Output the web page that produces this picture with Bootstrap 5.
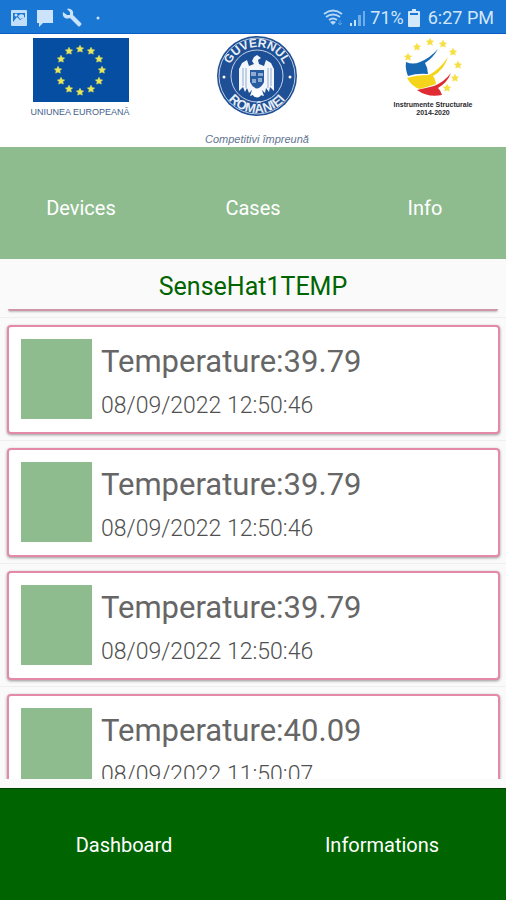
<!DOCTYPE html>
<html lang="en">
<head>
<meta charset="utf-8">
<meta name="viewport" content="width=device-width, initial-scale=1">
<title>SenseHat1TEMP</title>
<link href="https://cdn.jsdelivr.net/npm/bootstrap@5.3.0/dist/css/bootstrap.min.css" rel="stylesheet">
<style>
body { font-family: Roboto, "Liberation Sans", sans-serif; background: #fafafa; color: #666; }
.status-bar { background: #1976d2; color: #d3e7fb; height: 34px; font-size: 18px; line-height: 20px; border-bottom: 1px solid #0d5bc4; padding: 3px 12px 0 10px; }
.logo-bar { height: 113px; padding: 2px 32px 0; }
.logo-bar svg { display: block; overflow: visible; }
.logo-bar text { font-family: "Liberation Sans", sans-serif; }
.tab-bar { background: #8fbc8f; height: 112px; gap: 10px; }
.bottom-bar { background: #006400; height: 112px; gap: 10px; border-top: 1px solid #004000; }
.bar-btn { flex: 1 1 0; border: 0; background: transparent; color: #fff; font-size: 20px; line-height: 24px; padding: 10px 0 0; }
.bottom-bar .bar-btn { padding-top: 0; }
.screen-title { color: #006400; font-size: 25px; line-height: 32px; padding: 12px 0 6px; }
.readings { flex: 1 1 0; min-height: 0; overflow: hidden; margin-bottom: 9px; }
.reading { padding: 7px 6px 6px 7px; border-bottom: 1px solid #efefef; }
.reading-card { background: #fff; border: 2px solid #e58aa6; border-radius: 4px; box-shadow: 0 1px 3px rgba(0,0,0,.4); padding: 12px 12px 13px; gap: 9px; }
.swatch { width: 71px; height: 80px; background: #8fbc8f; }
.reading-value { font-size: 31px; line-height: 36px; padding-top: 5px; }
.reading-time { color: #505050; font-size: 23px; font-weight: 300; line-height: 26px; padding-top: 13px; }
.list-edge { height: 2px; background: #d095a6; margin: 0 8px 6px; box-shadow: 0 1px 2px rgba(0,0,0,.25); border-radius: 0 0 3px 3px; }
.edge-row { border-bottom: 1px solid #efefef; }
</style>
</head>
<body class="d-flex flex-column vh-100 overflow-hidden">
<div class="status-bar d-flex align-items-center justify-content-between flex-shrink-0">
  <div class="d-flex align-items-center gap-2">
    <svg width="18" height="18" viewBox="0 0 18 18" fill="#c2dff9" aria-hidden="true"><path fill-rule="evenodd" d="M2 1h14q1 0 1 1v14q0 1-1 1H2q-1 0-1-1V2q0-1 1-1zM3 4v9l4-5 3 3 5-3V4z"/><circle cx="6" cy="6" r="1.5"/><path d="M8 7l3-2 3 1v3l-4 1z"/></svg>
    <svg width="18" height="18" viewBox="0 0 18 18" fill="#cbe4fb" aria-hidden="true"><path d="M1 1h16v13H7l-4 4v-4H1z"/></svg>
    <svg width="20" height="20" viewBox="0 0 20 20" fill="#c8e3fb" aria-hidden="true"><path d="M5 1l3 3v3H5L1 4q-1 4 2 6 2 1 5 0l8 8q1 1 2 0l1-1q1-1 0-2l-8-8q1-5-3-6-1-1-3 0z"/></svg>
    <svg class="ms-1" width="8" height="8" viewBox="0 0 8 8" fill="#c8e3fb" aria-hidden="true"><circle cx="4" cy="4" r="1.5"/></svg>
  </div>
  <div class="d-flex align-items-center gap-1">
    <svg width="22" height="18" viewBox="0 0 22 18" fill="none" stroke="#b8d8f6" stroke-width="1.8" aria-hidden="true"><path d="M1 5q9-7 18 0M3 8q7-5 14 0M6 11q4-3 8 0"/><path d="M7 13q3-2 6 0l-3 3z" fill="#b8d8f6" stroke="none"/><path d="M17 11v5m-2-2l2 2 2-2" stroke="#5fa2e3" stroke-width="1"/></svg>
    <svg width="17" height="18" viewBox="0 0 17 18" aria-hidden="true"><g fill="#c8e2fa"><path d="M1 14h2v3H1zM5 11h2v6H5z"/></g><path d="M9 6h3v11H9zM14 2h2v15h-2z" fill="#6fadea"/></svg>
    <span>71%</span>
    <svg class="me-1" width="12" height="18" viewBox="0 0 12 18" fill="#d3e7fb" aria-hidden="true"><path fill-rule="evenodd" d="M4 0h4v2h3q1 0 1 1v14q0 1-1 1H1q-1 0-1-1V3q0-1 1-1h3zM2 4v2h8V4z"/></svg>
    <span>6:27 PM</span>
  </div>
</div>

<header class="logo-bar bg-white d-flex justify-content-between flex-shrink-0">
  <svg width="97" height="82" viewBox="0 0 97 82" role="img" aria-label="Uniunea Europeană">
    <defs><path id="star" stroke="#e6e65a" stroke-width=".6" stroke-linejoin="round" d="M0-3.7L1.2-1.3 3.6-1.1 1.8.7 2.3 3.1 0 2-2.3 3.1-1.8.7-3.6-1.1-1.2-1.3z"/></defs>
    <rect x="1" y="2" width="96" height="64" fill="#064ea2"/>
    <g fill="#e6e65a"><use href="#star" x="48" y="13"/><use href="#star" x="59" y="15"/><use href="#star" x="67" y="23"/><use href="#star" x="70" y="34"/><use href="#star" x="67" y="45"/><use href="#star" x="59" y="53"/><use href="#star" x="48" y="56"/><use href="#star" x="37" y="53"/><use href="#star" x="29" y="45"/><use href="#star" x="26" y="34"/><use href="#star" x="29" y="23"/><use href="#star" x="37" y="15"/></g>
    <text x="48" y="79" text-anchor="middle" font-size="9" fill="#44628c">UNIUNEA EUROPEANĂ</text>
  </svg>
  <svg width="104" height="110" viewBox="0 0 104 110" role="img" aria-label="Guvernul României, Competitivi împreună">
    <defs><path id="arcTop" d="M22 40a29 29 0 0 1 58 0"/><path id="arcBottom" d="M14 40a37 37 0 0 0 74 0"/></defs>
    <circle cx="51" cy="40" r="40" fill="#1f4f94"/><circle cx="51" cy="40" r="38" fill="none" stroke="#b9cbe3" stroke-width="1"/>
    <circle cx="51" cy="40" r="26" fill="#1d4f96" stroke="#c3d2e7" stroke-width="1"/>
    <g fill="#e8eff8" font-size="13" text-anchor="middle" font-weight="700"><text font-size="12"><textPath href="#arcTop" startOffset="50%">GUVERNUL</textPath></text><text><textPath href="#arcBottom" startOffset="50%">ROMÂNIEI</textPath></text></g>
    <circle cx="18" cy="41" r="1.5" fill="#fff"/><circle cx="84" cy="41" r="1.5" fill="#fff"/>
    <path fill="#f3f6fb" d="M46 25l2-4 3-2 4 3-3 2 1 4 5 2 2-6 5 3 3 6v22l-4-4-1 5-3-4-1 5-3-3 2 6-4-1-3 2-4-2-3 1 2-6-3 3-2-5-2 4-2-5-4 4V33l3-6 5-3 2 6 5-2z"/>
    <path fill="#285b9f" d="M44 34h14v12q-2 5-7 7-5-2-7-7z"/><path d="M45 36h5v4h-5zm7 1h5v3h-5zm-6 6h4v4h-4zm6-1h4v4h-4z" fill="#8eabd1"/>
    <path d="M40 32v20m-3-20v18m25-18v20m3-20v18" stroke="#8fabd0"/><circle cx="51" cy="57" r="4.5" fill="#fff"/>
    <text x="51" y="107" text-anchor="middle" font-size="11" font-style="italic" fill="#5f7592">Competitivi împreună</text>
  </svg>
  <svg width="88" height="82" viewBox="0 0 88 82" role="img" aria-label="Instrumente Structurale 2014-2020">
    <defs><path id="goldStar" fill="#f6df45" stroke="#f6df45" stroke-width=".6" d="M0-3.7L1.2-1.3 3.6-1.1 1.8.7 2.3 3.1 0 2-2.3 3.1-1.8.7-3.6-1.1-1.2-1.3z"/></defs>
    <use href="#goldStar" x="22" y="21"/><use href="#goldStar" x="31" y="11"/><use href="#goldStar" x="44" y="6"/><use href="#goldStar" x="57" y="8"/><use href="#goldStar" x="67" y="16"/><use href="#goldStar" x="72" y="29"/><use href="#goldStar" x="69" y="42"/><use href="#goldStar" x="61" y="52"/>
    <path fill="#1769b3" d="M20 26q7 3 14 0Q44 22 52 13 47 22 39 27q3 5 3 11-11-1-20 2-3-7-2-14z"/>
    <path fill="#f4d51c" d="M21 42q9-3 22-3Q54 33 62 21 58 34 47 40q2 2 3 8-9 3-16 5-8-2-13-11z"/>
    <path fill="#df2b32" d="M31 54q9-2 17-4 10-4 17-13-4 10-13 15 3 3 4 7-14 3-25-5z"/>
    <g fill="#29292c" font-size="7" font-weight="700" text-anchor="middle"><text x="47" y="71">Instrumente Structurale</text><text x="47" y="79">2014-2020</text></g>
  </svg>
</header>

<nav class="tab-bar d-flex flex-shrink-0" aria-label="Sections">
  <button type="button" class="bar-btn">Devices</button>
  <button type="button" class="bar-btn">Cases</button>
  <button type="button" class="bar-btn">Info</button>
</nav>

<h1 class="screen-title text-center fw-normal m-0 flex-shrink-0">SenseHat1TEMP</h1>

<main class="readings">
  <div class="edge-row"><div class="list-edge"></div></div>
  <ul class="list-unstyled m-0">
    <li class="reading"><div class="reading-card d-flex align-items-start"><div class="swatch flex-shrink-0"></div><div><div class="reading-value">Temperature:39.79</div><div class="reading-time">08/09/2022 12:50:46</div></div></div></li>
    <li class="reading"><div class="reading-card d-flex align-items-start"><div class="swatch flex-shrink-0"></div><div><div class="reading-value">Temperature:39.79</div><div class="reading-time">08/09/2022 12:50:46</div></div></div></li>
    <li class="reading"><div class="reading-card d-flex align-items-start"><div class="swatch flex-shrink-0"></div><div><div class="reading-value">Temperature:39.79</div><div class="reading-time">08/09/2022 12:50:46</div></div></div></li>
    <li class="reading"><div class="reading-card d-flex align-items-start"><div class="swatch flex-shrink-0"></div><div><div class="reading-value">Temperature:40.09</div><div class="reading-time">08/09/2022 11:50:07</div></div></div></li>
  </ul>
</main>

<nav class="bottom-bar d-flex flex-shrink-0" aria-label="Main">
  <button type="button" class="bar-btn">Dashboard</button>
  <button type="button" class="bar-btn">Informations</button>
</nav>
<script src="https://cdn.jsdelivr.net/npm/bootstrap@5.3.0/dist/js/bootstrap.bundle.min.js"></script>
</body>
</html>
